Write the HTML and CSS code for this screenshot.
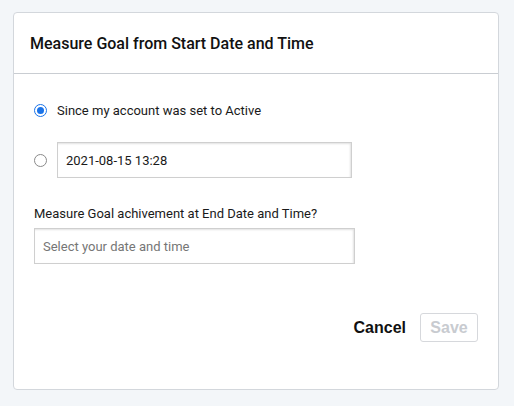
FILE: index.html
```html
<!DOCTYPE html>
<html>
<head>
<meta charset="utf-8">
<link rel="stylesheet" href="styles.css">
</head>
<body>
<div class="card">
  <div class="card-header">
    <h2 class="title">Measure Goal from Start Date and Time</h2>
  </div>
  <div class="card-body">
    <label class="radio-row">
      <span class="radio checked"></span>
      <span class="radio-label">Since my account was set to Active</span>
    </label>
    <div class="radio-row row-input">
      <span class="radio"></span>
      <div class="input input-start">2021-08-15 13:28</div>
    </div>
    <div class="field-label">Measure Goal achivement at End Date and Time?</div>
    <div class="input input-end placeholder">Select your date and time</div>
    <div class="actions">
      <button class="btn-cancel">Cancel</button>
      <button class="btn-save" disabled>Save</button>
    </div>
  </div>
</div>
</body>
</html>
```
FILE: styles.css
```css
html, body {
  margin: 0;
  padding: 0;
}
body {
  background: #f3f6f9;
  font-family: Roboto, "Liberation Sans", sans-serif;
  color: #1a1a1a;
  padding: 12px 15px 0 13px;
}
.card {
  width: 484px;
  height: 376px;
  background: #ffffff;
  border: 1px solid #d3d7dc;
  border-radius: 4px;
  box-sizing: content-box;
}
.card-header {
  height: 60px;
  border-bottom: 1px solid #c9cdd2;
  display: flex;
  align-items: center;
  padding-left: 16px;
}
.title {
  margin: 0;
  font-size: 16px;
  font-weight: 500;
  color: #111;
}
.card-body {
  padding: 0 20px 0 20px;
  display: flex;
  flex-direction: column;
}
.radio-row {
  display: flex;
  align-items: center;
  font-size: 13px;
}
.radio-row:first-child {
  margin-top: 28px;
  height: 16px;
}
.radio {
  width: 11px;
  height: 11px;
  border: 1px solid #8a8a8a;
  border-radius: 50%;
  box-sizing: content-box;
  flex: none;
  position: relative;
}
.radio.checked {
  border-color: #1a73e8;
  width: 11px;
  height: 11px;
  background: #fff;
}
.radio.checked::after {
  content: "";
  position: absolute;
  left: 2px;
  top: 2px;
  width: 7px;
  height: 7px;
  border-radius: 50%;
  background: #1a73e8;
}
.radio-label {
  margin-left: 10px;
  color: #1a1a1a;
}
.row-input {
  margin-top: 24px;
}
.input {
  height: 34px;
  border: 1px solid #cfcfcf;
  box-shadow: inset -1px 1px 2px rgba(0,0,0,0.12);
  display: flex;
  align-items: center;
  font-size: 13px;
  box-sizing: content-box;
}
.input-start {
  width: 285px;
  margin-left: 10px;
  padding-left: 8px;
}
.field-label {
  font-size: 13px;
  margin-top: 28px;
  margin-left: 0;
}
.input-end {
  width: 311px;
  margin-top: 7px;
  padding-left: 8px;
  color: #767676;
}
.actions {
  display: flex;
  justify-content: flex-end;
  align-items: center;
  margin-top: 49px;
  margin-right: 0;
  gap: 14px;
}
button {
  font-family: "Liberation Sans", Arial, sans-serif;
  font-weight: bold;
  font-size: 16px;
}
.btn-cancel {
  background: none;
  border: none;
  padding: 0;
  color: #111;
}
.btn-save {
  width: 58px;
  height: 29px;
  background: #fff;
  border: 1px solid #d6d8dc;
  border-radius: 3px;
  color: #c8cbd0;
  padding: 0;
}
```
